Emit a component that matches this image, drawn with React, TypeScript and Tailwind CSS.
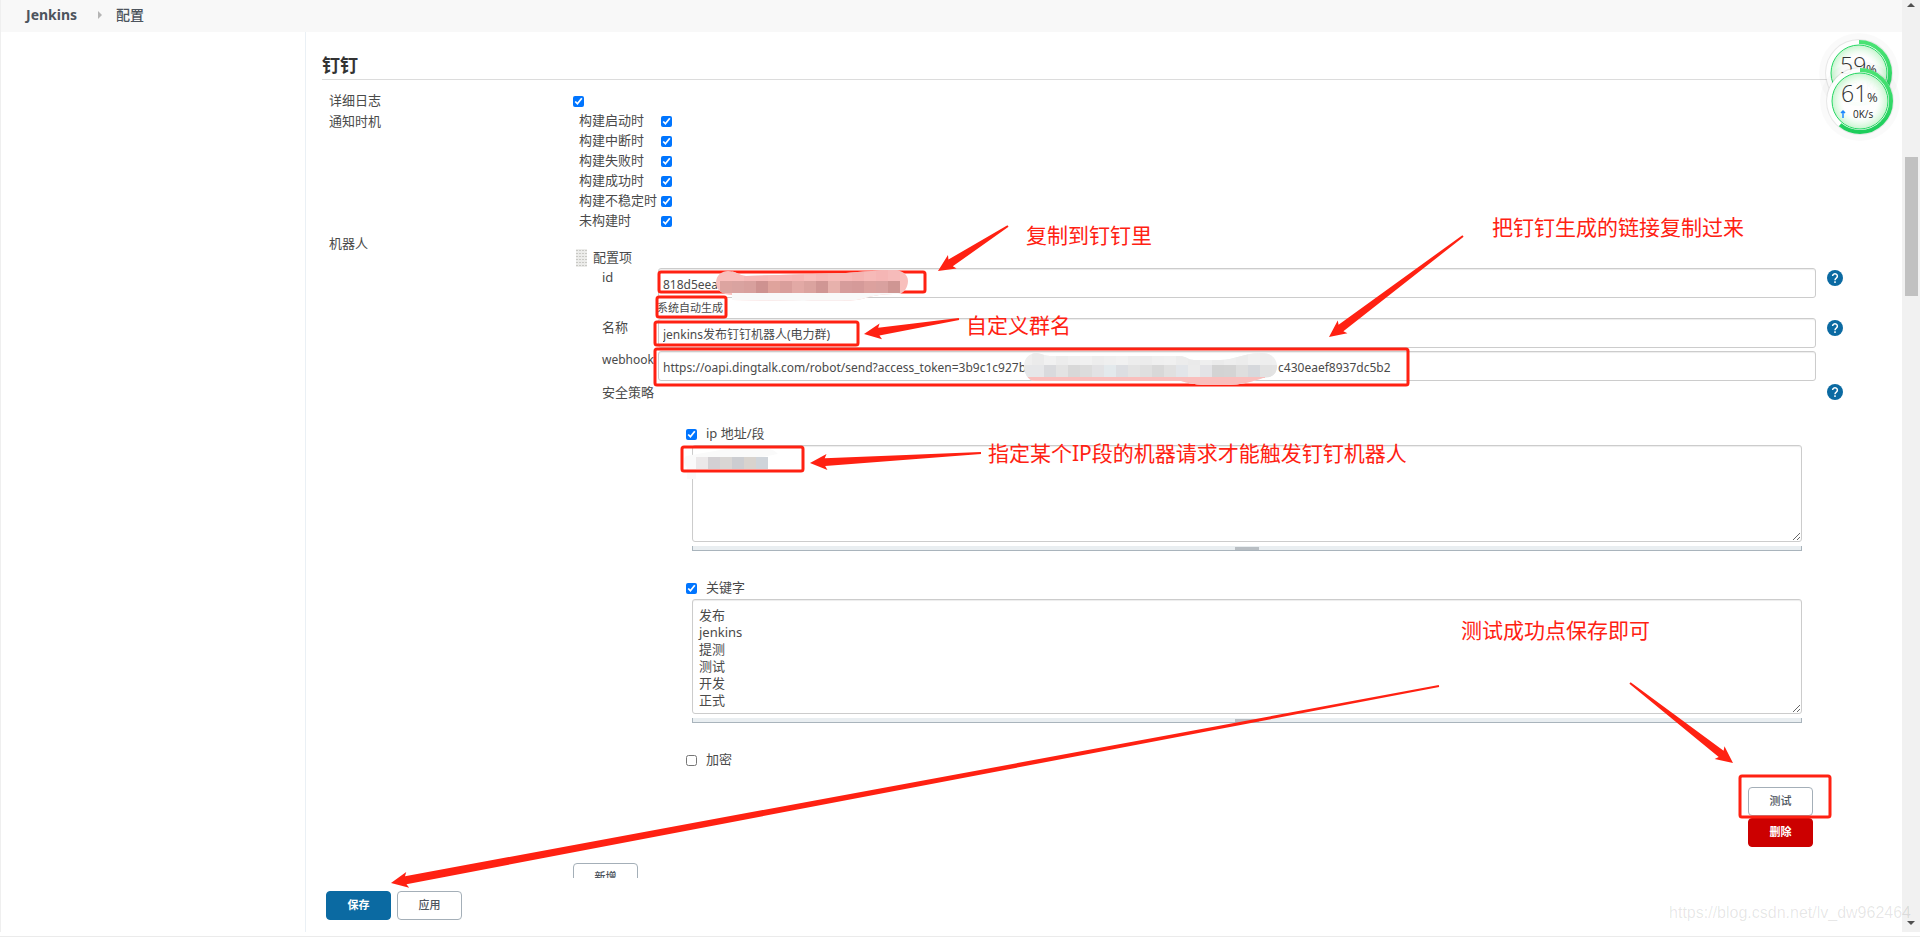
import { useState } from 'react';
import type { ReactNode } from 'react';

const triggers = ['构建启动时', '构建中断时', '构建失败时', '构建成功时', '构建不稳定时', '未构建时'];

const keywords = ['发布', 'jenkins', '提测', '测试', '开发', '正式'].join('\n');

const RED = '#ff2112';

export default function App() {
  return (
    <div className="relative flex h-screen min-w-[1200px] flex-col overflow-hidden border-b border-[#ebebeb] bg-white font-['Noto_Sans','Noto_Sans_CJK_SC',sans-serif] text-[13px] text-[#4a4a4a]">
      <div className="flex min-h-0 flex-1">
        <div className="flex min-w-0 flex-1 flex-col border-l border-[#efefef]">
          <Breadcrumbs />
          <div className="flex min-h-0 flex-1">
            <aside className="w-[304px] shrink-0" />
            <main className="flex min-w-0 flex-1 flex-col border-l border-[#eaf0f5] px-4">
              <div className="min-h-0 flex-1 overflow-hidden">
                <ConfigForm />
              </div>
              <footer className="flex h-[54px] shrink-0 gap-[6px] pl-1 pt-[13px]">
                <Button tone="primary">保存</Button>
                <Button>应用</Button>
              </footer>
            </main>
          </div>
        </div>
        <Scrollbar />
      </div>
      <div className="h-1 shrink-0" />
      <Annotations />
      <SpeedBalls />
      <div className="absolute bottom-[13px] right-[9px] font-['Liberation_Sans',sans-serif] text-base leading-5 text-black/10">
        https://blog.csdn.net/lv_dw962464
      </div>
    </div>
  );
}

function Breadcrumbs() {
  return (
    <nav className="flex h-8 shrink-0 items-center bg-[#f8f8f8] pb-[2px] pl-[25px] text-sm font-bold text-[#4d545d]">
      <a href="#" className="leading-5">Jenkins</a>
      <svg className="ml-[21px] mr-[14px]" width="4" height="8" viewBox="0 0 4 8" fill="#b5b5b5">
        <path d="M0 0l4 4-4 4z" />
      </svg>
      <a href="#" className="font-medium leading-5">配置</a>
    </nav>
  );
}

function ConfigForm() {
  return (
    <form onSubmit={(e) => e.preventDefault()}>
      <h2 className="border-b border-[#dcdcdc] pb-[2px] pt-[21px] text-lg font-bold leading-6 text-[#333]">钉钉</h2>

      <div className="pl-[7px] pt-[11px]">
        <div className="flex h-5 items-center">
          <label htmlFor="verbose" className="w-[244px]">详细日志</label>
          <Checkbox id="verbose" checked />
        </div>

        <div className="flex">
          <div className="w-[244px] leading-5">通知时机</div>
          <div className="pl-[6px]">
            {triggers.map((name, i) => (
              <div key={name} className="flex h-5 items-center">
                <label htmlFor={`trigger-${i}`} className="w-[82px]">{name}</label>
                <Checkbox id={`trigger-${i}`} checked />
              </div>
            ))}
          </div>
        </div>

        <div className="flex pt-[2px]">
          <div className="w-[244px] shrink-0 leading-5">机器人</div>
          <div className="min-w-0 flex-1 pt-[15px]">
            <div className="flex h-5 items-center gap-[6px] pl-[3px]">
              <DragHandle />
              配置项
            </div>
            <Robot />
            <div className="pt-4">
              <Button>新增</Button>
            </div>
          </div>
        </div>
      </div>
    </form>
  );
}

function Robot() {
  return (
    <div className="pl-[29px]">
      <Field id="robot-id" label="id" value="818d5eea" help />
      <div className="h-5 pl-[55px] text-[11px] leading-5">系统自动生成</div>
      <Field id="robot-name" label="名称" value="jenkins发布钉钉机器人(电力群)" help />
      <div className="pt-[3px]">
        <Field
          id="robot-webhook"
          label="webhook"
          value="https://oapi.dingtalk.com/robot/send?access_token=3b9c1c927b"
          tail="c430eaef8937dc5b2"
        />
      </div>
      <div className="flex justify-between pt-[2px]">
        <span className="leading-[18px]">安全策略</span>
        <div className="w-[70px] pl-[11px] pt-px"><Help /></div>
      </div>

      <div className="px-[84px] pt-[23px]">
        <Policy id="policy-ip" label="ip 地址/段" checked />
        <TextBox label="ip 地址/段" value="" size="h-[97px]" />
        <div className="pt-[27px]">
          <Policy id="policy-keyword" label="关键字" checked />
          <TextBox label="关键字" value={keywords} size="h-[115px]" />
        </div>
        <div className="pt-[27px]">
          <Policy id="policy-encrypt" label="加密" />
        </div>
      </div>

      <div className="flex flex-col items-end gap-[2px] pr-[73px] pt-[17px]">
        <Button>测试</Button>
        <Button tone="danger">删除</Button>
      </div>
    </div>
  );
}

function Field({ id, label, value, tail, help }: { id: string; label: string; value: string; tail?: string; help?: boolean }) {
  // the middle of the token is masked, spaces keep its two ends apart
  const text = tail ? value + '\u2003'.repeat(21) + tail : value;
  return (
    <div className="flex">
      <label htmlFor={id} className={`w-[56px] shrink-0 whitespace-nowrap leading-[18px] ${tail ? 'text-xs' : ''}`}>{label}</label>
      <input
        id={id}
        defaultValue={text}
        className="h-[30px] min-w-0 flex-1 rounded-[3px] border border-[#ccc] bg-white px-1 pt-[2px] text-xs shadow-[inset_0_1px_1px_rgba(0,0,0,0.075)] outline-none"
      />
      <div className="w-[70px] shrink-0 pl-[11px] pt-[2px]">{help && <Help />}</div>
    </div>
  );
}

function Policy({ id, label, checked }: { id: string; label: string; checked?: boolean }) {
  return (
    <div className="flex h-5 items-center gap-[9px]">
      <Checkbox id={id} checked={checked} />
      <label htmlFor={id}>{label}</label>
    </div>
  );
}

function TextBox({ label, value, size }: { label: string; value: string; size: string }) {
  return (
    <div className="pl-[6px] pt-px">
      <textarea
        aria-label={label}
        defaultValue={value}
        className={`${size} block w-full resize rounded-[3px] border border-[#ccc] bg-white px-[6px] pt-[7px] leading-[17px] shadow-[inset_0_1px_1px_rgba(0,0,0,0.075)] outline-none`}
      />
      <div className="mt-1 flex h-[5px] justify-center border-x border-b border-[#a9b4bc] bg-[#e9eef1]">
        <div className="mt-px h-[3px] w-6 bg-[#b8bec3]" />
      </div>
    </div>
  );
}

function Checkbox({ id, checked }: { id: string; checked?: boolean }) {
  const [on, setOn] = useState(!!checked);
  return <input id={id} type="checkbox" checked={on} onChange={() => setOn(!on)} className="size-[11px] shrink-0" />;
}

const tones = {
  plain: 'border-[#a4afb8] bg-white font-medium text-[#4d545d]',
  primary: 'border-[#0b6aa2] bg-[#0b6aa2] font-bold text-white',
  danger: 'border-[#c00] bg-[#c00] font-bold text-white',
};

function Button({ tone = 'plain', children }: { tone?: keyof typeof tones; children: ReactNode }) {
  return (
    <button type="button" className={`h-[29px] w-[65px] rounded-[4px] border text-[11px] ${tones[tone]}`}>
      {children}
    </button>
  );
}

function Help() {
  return (
    <button type="button" aria-label="帮助" className="block size-4">
      <svg width="16" height="16" viewBox="0 0 16 16">
        <circle cx="8" cy="8" r="8" fill="#0b6aa2" />
        <path d="M5.6 6.1a2.4 2.3 0 1 1 3.7 2C8.400 8.700 8 9 8 10.200" fill="none" stroke="#fff" strokeWidth="1.500" />
        <rect x="7.200" y="11.300" width="1.600" height="1.600" fill="#fff" />
      </svg>
    </button>
  );
}

function DragHandle() {
  return (
    <svg width="11" height="18" viewBox="0 0 11 18">
      <rect width="11" height="18" fill="#ececea" />
      <path d="M0 1.500h11M0 4.500h11M0 7.500h11M0 10.500h11M0 13.500h11M0 16.500h11" stroke="#c9c9c5" strokeDasharray="2 1" />
    </svg>
  );
}

function Scrollbar() {
  return (
    <div className="flex w-[18px] shrink-0 flex-col items-center justify-between bg-[#f1f1f1] pb-[7px] pt-[3px]">
      <svg width="8" height="4" viewBox="0 0 8 4" fill="#505050"><path d="M0 4l4-4 4 4z" /></svg>
      <div className="mb-auto mt-[150px] h-[139px] w-[13px] bg-[#c1c1c1]" />
      <svg width="8" height="4" viewBox="0 0 8 4" fill="#505050"><path d="M0 0h8L4 4z" /></svg>
    </div>
  );
}

type Point = [number, number];

// tapered arrow, thin at the tail and widening up to the barbed head
function Arrow({ from, to }: { from: Point; to: Point }) {
  const dx = from[0] - to[0];
  const dy = from[1] - to[1];
  const len = Math.hypot(dx, dy);
  const at = (along: number, side: number) =>
    `${to[0] + (dx * along - dy * side) / len},${to[1] + (dy * along + dx * side) / len}`;
  const points = [at(0, 0), at(17, 8), at(15, 4), at(len, 1), at(len, -1), at(15, -4), at(17, -8)];
  return <polygon points={points.join(' ')} fill={RED} />;
}

function Frame({ x, y, w, h }: { x: number; y: number; w: number; h: number }) {
  return <rect x={x} y={y} width={w} height={h} rx="2" fill="none" stroke={RED} strokeWidth="3" />;
}

function Cells({ x, y, colors }: { x: number; y: number; colors: string[] }) {
  return (
    <>
      {colors.map((fill, i) => (
        <rect key={i} x={x + i * 12} y={y} width="12" height="12" fill={fill} />
      ))}
    </>
  );
}

function Annotations() {
  return (
    <div className="pointer-events-none absolute inset-0 text-[21px] leading-7 text-[#ff2112]">
      <svg className="absolute left-0 top-0" width="1920" height="937">
        <defs>
          <clipPath id="mask-id">
            <path d="M716 283c0-8 6-12 12-12 8 0 12 5 18 5l100-3c16-1 30-3 48-3 9 0 14 5 14 11s-4 13-10 13c-14 0-24 1-36 5-14 3-40 1-58 2l-72-1v-5c-8 0-16-4-16-12z" />
          </clipPath>
          <clipPath id="mask-token">
            <path d="M1024 366c0-8 6-13 12-13 5 0 8 3 14 3h130c6 0 8 4 14 4h26c14 0 24-7 42-7 9 0 15 6 15 13s-4 12-14 12c-12 4-22 7-36 7-18 0-30 1-46-4h-146c-7 0-11-8-11-15z" />
          </clipPath>
        </defs>

        <path d="M686 456l40-7c20-3 45-4 52 5l-82 15v10h-9v-12c-4-3-4-8-1-11z" fill="#fafafa" />
        <Cells x={696} y={457} colors={['#ebe8e9', '#d3d0d3', '#d9d6d4', '#cccdd1', '#d8d3ce', '#cfd4da']} />

        <Frame x={659} y={272} w={266} h={20} />
        <Frame x={657} y={297} w={69} h={20} />
        <Frame x={655} y={322} w={203} h={23} />
        <Frame x={655} y={349} w={753} h={36} />
        <Frame x={682} y={447} w={121} h={24} />
        <Frame x={1740} y={776} w={90} h={41} />

        <g clipPath="url(#mask-id)">
          <rect x="716" y="269" width="192" height="32" fill="#f8bfbc" />
          <Cells x={732} y={269} colors={['#f8bfbc', '#f6b9b7', '#f6b9b7', '#f7bcb9', '#f6b9b7', '#f5b7b5', '#f7bebb', '#f5b8b6', '#f6bcb9', '#f6b9b8', '#f4b5b3', '#f6bab8', '#f5b6b5', '#f6bbba']} />
          <Cells x={720} y={281} colors={['#dca4a0', '#d9a3a0', '#d8a09d', '#ce9290', '#dfa39c', '#d99e9b', '#e2a9a5', '#dba39f', '#d09694', '#e7b1ac', '#d69c9b', '#d59a99', '#dca19e', '#d9a19f', '#cf9693']} />
          <rect x="732" y="293" width="176" height="8" fill="#f9f9f9" />
        </g>

        <g clipPath="url(#mask-token)">
          <rect x="1020" y="350" width="260" height="36" fill="#efefef" />
          <Cells x={1032} y={353} colors={['#ebebeb', '#f1f1f1', '#ececec', '#efefef', '#f1f1f1', '#ededed', '#efefef', '#f1f1f1', '#ededed', '#ececec', '#efefef', '#f0f0f0', '#ececec', '#eaeaea', '#efefef', '#ebebeb', '#eee', '#ececec', '#f0f0f0', '#eee']} />
          <Cells x={1020} y={365} colors={['#e6e7e9', '#e6e7e9', '#d9dadd', '#e3e3e3', '#d8d8d8', '#dcdcdc', '#e2e2e4', '#e3e9ec', '#dcdee2', '#e3e3e3', '#dfdfdf', '#d8d8d8', '#e0e0e0', '#e2e5e9', '#ebebeb', '#e3e3e6', '#d3d3d3', '#d4d4d4', '#dedede', '#d6d8dc', '#e2e2e2', '#e3e3e3']} />
          <rect x="1020" y="377" width="245" height="9" fill="#f9bfbd" />
        </g>

        <Arrow from={[1008, 226]} to={[938, 271]} />
        <Arrow from={[959, 319]} to={[864, 334]} />
        <Arrow from={[1463, 236]} to={[1329, 337]} />
        <Arrow from={[981, 453]} to={[810, 463]} />
        <Arrow from={[1439, 686]} to={[391, 883]} />
        <Arrow from={[1630, 683]} to={[1733, 763]} />
      </svg>

      <span className="absolute left-[1026px] top-[221px]">复制到钉钉里</span>
      <span className="absolute left-[966px] top-[311px]">自定义群名</span>
      <span className="absolute left-[1492px] top-[213px]">把钉钉生成的链接复制过来</span>
      <span className="absolute left-[988px] top-[439px]">指定某个IP段的机器请求才能触发钉钉机器人</span>
      <span className="absolute left-[1461px] top-[616px]">测试成功点保存即可</span>
    </div>
  );
}

function Ball({ cx, cy, percent, speed }: { cx: number; cy: number; percent: number; speed: string }) {
  const ring = 2 * Math.PI * 31;
  return (
    <g>
      <circle cx={cx} cy={cy} r="40" fill="#000" fillOpacity="0.02" />
      <circle cx={cx} cy={cy} r="34" fill="#000" fillOpacity="0.08" />
      <circle cx={cx} cy={cy} r="33" fill="#fff" fillOpacity="0.950" />
      <circle
        cx={cx}
        cy={cy}
        r="31"
        fill="none"
        stroke="url(#ball-ring)"
        strokeWidth="4"
        strokeDasharray={`${(ring * percent) / 100} ${ring}`}
        transform={`rotate(-90 ${cx} ${cy})`}
      />
      <circle cx={cx} cy={cy} r="28" fill="url(#ball-fill)" stroke="#27d765" />
      <text x={cx - 19} y={cy + 1} fontSize="23" fontWeight="300" fill="#333">{percent}</text>
      <text x={cx + 7} y={cy + 1} fontSize="13" fill="#333">%</text>
      <path d={`M${cx - 17} ${cy + 17}v-6m-2 1l2-2 2 2`} fill="none" stroke="#1e88ff" strokeWidth="1.500" />
      <text x={cx - 7} y={cy + 17} fontSize="10" fill="#222">{speed}</text>
    </g>
  );
}

function SpeedBalls() {
  return (
    <svg className="absolute right-[18px] top-[30px] font-['Open_Sans',sans-serif]" width="90" height="116">
      <defs>
        <radialGradient id="ball-fill">
          <stop offset="0.600" stopColor="#fff" stopOpacity="0.500" />
          <stop offset="1" stopColor="#c4f5cc" />
        </radialGradient>
        <linearGradient id="ball-ring">
          <stop offset="0" stopColor="#1ccd5b" />
          <stop offset="1" stopColor="#4be374" />
        </linearGradient>
      </defs>
      <Ball cx={47} cy={43} percent={59} speed="0.1K/s" />
      <Ball cx={48} cy={71} percent={61} speed="0K/s" />
    </svg>
  );
}
